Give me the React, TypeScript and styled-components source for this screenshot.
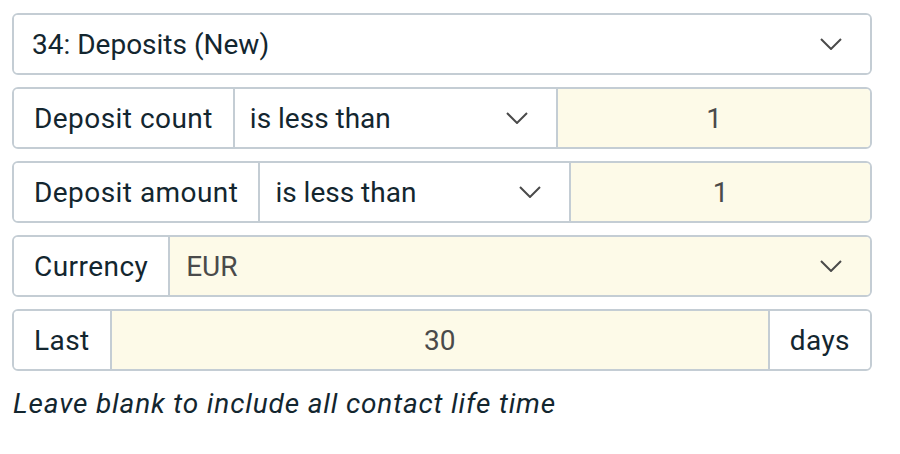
import * as React from 'react'
import styled, { createGlobalStyle } from 'styled-components'

const GlobalStyle = createGlobalStyle`
    body {
        margin: 0;
        background: #ffffff;
        font-family: Roboto, "Liberation Sans", sans-serif;
    }

    *, *::before, *::after {
        box-sizing: border-box;
    }
`

const Chevron = () => (
    <svg width="22" height="12" viewBox="0 0 22 12" fill="none">
        <path d="M1 1 L11 11 L21 1" stroke="#4a4a4a" strokeWidth="2" />
    </svg>
)

export default function App(): React.ReactElement {
    return (
        <Form>
            <GlobalStyle />
            <Row>
                <Select>
                    <span>34: Deposits (New)</span>
                    <Chevron />
                </Select>
            </Row>
            <Row>
                <Label>Deposit count</Label>
                <Select $half $inset={15}>
                    <span>is less than</span>
                    <Chevron />
                </Select>
                <Input>1</Input>
            </Row>
            <Row>
                <Label>Deposit amount</Label>
                <Select $half $inset={15}>
                    <span>is less than</span>
                    <Chevron />
                </Select>
                <Input>1</Input>
            </Row>
            <Row>
                <Label>Currency</Label>
                <Select $filled $muted $inset={16}>
                    <span>EUR</span>
                    <Chevron />
                </Select>
            </Row>
            <Row>
                <Label>Last</Label>
                <Input>30</Input>
                <Label>days</Label>
            </Row>
            <Hint>Leave blank to include all contact life time</Hint>
        </Form>
    )
}

const Form = styled.div`
    width: 872px;
    padding: 13px 0 0 12px;
    display: flex;
    flex-direction: column;
    gap: 12px;
`

const Row = styled.div`
    display: flex;
    height: 62px;
    border: 2px solid #c4cdd4;
    border-radius: 6px;
    overflow: hidden;

    & > * + * {
        border-left: 2px solid #c4cdd4;
    }
`

const Label = styled.div`
    display: flex;
    align-items: center;
    padding: 0 20px 0 20px;
    font-size: 28px;
    color: #13262f;
    letter-spacing: 0.45px;
    background: #ffffff;
    white-space: nowrap;
`

const Select = styled.div<{ $half?: boolean; $filled?: boolean; $muted?: boolean; $inset?: number }>`
    flex: ${(p) => (p.$half ? '1 1 0' : '1 1 auto')};
    min-width: 0;
    display: flex;
    align-items: center;
    justify-content: space-between;
    padding: 0 28px 0 ${(p) => p.$inset ?? 18}px;
    font-size: 28px;
    color: ${(p) => (p.$muted ? '#4a4a4a' : '#13262f')};
    background: ${(p) => (p.$filled ? '#fdfae8' : '#ffffff')};
`

const Input = styled.div`
    flex: 1 1 35px;
    min-width: 0;
    display: flex;
    align-items: center;
    justify-content: center;
    font-size: 28px;
    color: #4a4a4a;
    background: #fdfae8;
`

const Hint = styled.div`
    margin-top: 4px;
    padding-left: 1px;
    font-size: 28px;
    font-style: italic;
    letter-spacing: 0.85px;
    color: #13262f;
`
